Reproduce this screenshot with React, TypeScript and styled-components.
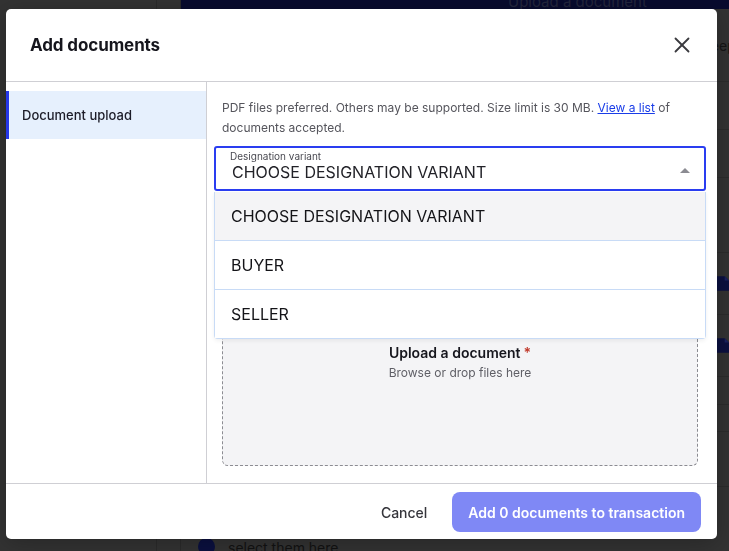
import React from "react";
import styled, {createGlobalStyle} from "styled-components";
import {X} from "lucide-react";

const GlobalStyle = createGlobalStyle`
  html, body {
    margin: 0;
    padding: 0;
    height: 100%;
    overflow: hidden;
  }
  body {
    font-family: Inter, "Noto Sans", sans-serif;
    background: #333333;
  }
  * {
    box-sizing: border-box;
  }
`;

/* ---------- dimmed page behind the dialog ---------- */

const Page = styled.div`
  display: flex;
  height: 100vh;
  background: #333333;
`;

const BgNav = styled.div`
  width: 157px;
  flex-shrink: 0;
  border-right: 1px solid #2b2b2b;
`;

const BgRail = styled.div`
  width: 24px;
  flex-shrink: 0;
  border-right: 1px solid #2b2b2b;
`;

const BgMain = styled.div`
  flex: 1;
  display: flex;
  flex-direction: column;
  min-width: 0;
`;

const BgTopBar = styled.div`
  height: 9px;
  flex-shrink: 0;
  background: #080b2e;
  overflow: hidden;
  display: flex;
  align-items: flex-end;
  padding-left: 327px;
  color: #23263d;
  font-size: 15px;
  line-height: 15px;
`;

const BgRow = styled.div<{$h: number}>`
  height: ${p => p.$h}px;
  flex-shrink: 0;
  border-bottom: 1px solid #2c2c2c;
  display: flex;
  align-items: center;
  padding-left: 521px;
  color: #151515;
  font-size: 14px;
  white-space: nowrap;
  overflow: hidden;
`;

const BgDocRow = styled(BgRow)`
  padding-left: 536px;
`;

const BgBanner = styled.div`
  display: flex;
  gap: 13px;
  padding: 0 0 0 17px;
  margin-top: 31px;
  color: #121212;
  font-size: 14px;
  line-height: 20px;
  white-space: nowrap;
`;

const InfoDot = styled.div`
  width: 17px;
  height: 17px;
  border-radius: 50%;
  background: #0b1040;
  margin-top: 20px;
  flex-shrink: 0;
`;

/* ---------- dialog ---------- */

const Overlay = styled.div`
  position: fixed;
  inset: 0;
  padding: 9px 12px 12px 6px;
  display: flex;
`;

const Modal = styled.div`
  flex: 1;
  display: flex;
  flex-direction: column;
  background: #ffffff;
  border-radius: 5px;
  box-shadow: 0 4px 24px rgba(0, 0, 0, 0.25);
`;

const Header = styled.div`
  height: 73px;
  flex-shrink: 0;
  display: flex;
  align-items: center;
  justify-content: space-between;
  padding: 0 22px 0 24px;
  border-bottom: 1px solid #cfcfd4;
`;

const Title = styled.h2`
  margin: 0;
  font-size: 17px;
  font-weight: 700;
  letter-spacing: -0.1px;
  color: #16161d;
`;

const CloseButton = styled.button`
  border: 0;
  background: none;
  padding: 0;
  display: flex;
  color: #3a3a3f;
  cursor: pointer;
`;

const Body = styled.div`
  flex: 1;
  display: flex;
  min-height: 0;
`;

const Sidebar = styled.nav`
  width: 201px;
  flex-shrink: 0;
  padding-top: 9px;
  border-right: 1px solid #cfcfd4;
`;

const NavItem = styled.div<{$active?: boolean}>`
  height: 48px;
  display: flex;
  align-items: center;
  padding-left: 13px;
  border-left: 3px solid ${p => (p.$active ? "#2537e8" : "transparent")};
  background: ${p => (p.$active ? "#e6f0fd" : "transparent")};
  font-size: 13px;
  font-weight: 500;
  color: #1c1c28;
`;

const Content = styled.div`
  flex: 1;
  display: flex;
  flex-direction: column;
  padding: 16px 19px 17px 15px;
`;

const Hint = styled.p`
  margin: 0;
  font-size: 12px;
  line-height: 20px;
  color: #55555c;
`;

const Link = styled.a`
  color: #1a3de8;
  text-decoration: underline;
`;

const SelectWrap = styled.div`
  position: relative;
  margin: 8px -8px 0;
`;

const SelectBox = styled.div`
  height: 45px;
  display: flex;
  align-items: center;
  border: 2px solid #2a3df0;
  border-radius: 3px;
  padding: 0 14px;
`;

const SelectValue = styled.div`
  flex: 1;
  display: flex;
  flex-direction: column;
  padding-bottom: 5px;
`;

const SelectLabel = styled.span`
  font-size: 10px;
  line-height: 12px;
  color: #4a4a52;
`;

const SelectText = styled.span`
  font-size: 16px;
  line-height: 20px;
  color: #222228;
  padding-left: 2px;
`;

const Caret = styled.span`
  width: 0;
  height: 0;
  margin-top: 3px;
  border-left: 5px solid transparent;
  border-right: 5px solid transparent;
  border-bottom: 5px solid #8b8b92;
`;

const Menu = styled.ul`
  position: absolute;
  top: 100%;
  left: 0;
  right: 0;
  margin: 1px 0 0;
  padding: 0;
  list-style: none;
  background: #ffffff;
  border: 1px solid #c8dbf6;
  border-top: 0;
  border-radius: 0 0 4px 4px;
  box-shadow: 0 2px 4px rgba(0, 0, 0, 0.06);
  z-index: 2;
`;

const MenuItem = styled.li<{$hover?: boolean}>`
  height: 49px;
  display: flex;
  align-items: center;
  padding-left: 16px;
  font-size: 16px;
  color: #141418;
  background: ${p => (p.$hover ? "#f4f4f6" : "#ffffff")};
  border-bottom: 1px solid #c8dbf6;
  &:last-child {
    border-bottom: 0;
    height: 48px;
  }
`;

const DropZone = styled.div`
  flex: 1;
  margin-top: 16px;
  border: 1px dashed #8c8c92;
  border-radius: 6px;
  background: #f4f4f6;
  text-align: center;
  padding-top: 135px;
`;

const DropTitle = styled.div`
  font-size: 14px;
  line-height: 20px;
  font-weight: 600;
  color: #16161d;
`;

const Required = styled.span`
  color: #c0392b;
  margin-left: 3px;
`;

const DropHint = styled.div`
  font-size: 12px;
  line-height: 20px;
  color: #5f5f66;
`;

const Footer = styled.div`
  height: 56px;
  flex-shrink: 0;
  display: flex;
  align-items: center;
  justify-content: flex-end;
  gap: 25px;
  padding-right: 16px;
  border-top: 1px solid #cfcfd4;
`;

const TextButton = styled.button`
  border: 0;
  background: none;
  padding: 0;
  font-family: inherit;
  font-size: 14px;
  font-weight: 500;
  color: #35353b;
  margin-top: 1px;
`;

const PrimaryButton = styled.button`
  height: 40px;
  border: 0;
  border-radius: 8px;
  padding: 0 16px;
  background: #7f88f5;
  color: #ffffff;
  font-family: inherit;
  font-size: 14px;
  font-weight: 600;
  margin-top: 1px;
`;

const FileIcon = () => (
  <svg width="14" height="17" viewBox="0 0 14 17">
    <path d="M0 0h9l5 5v12H0z" fill="#0b1040" />
    <path d="M9 0v5h5" fill="#1b2260" />
  </svg>
);

const options = ["CHOOSE DESIGNATION VARIANT", "BUYER", "SELLER"];

export default function App() {
  return (
    <>
      <GlobalStyle />
      <Page>
        <BgNav />
        <BgRail />
        <BgMain>
          <BgTopBar>
            <span>Upload a document</span>
          </BgTopBar>
          <BgRow $h={73}>Keep</BgRow>
          <BgRow $h={48} />
          <BgRow $h={48} />
          <BgRow $h={75} />
          <BgDocRow $h={62}>
            <FileIcon />
          </BgDocRow>
          <BgDocRow $h={62}>
            <FileIcon />
          </BgDocRow>
          <BgRow $h={28} />
          <BgRow $h={27} />
          <BgRow $h={55} />
          <BgBanner>
            <InfoDot />
            <div>
              <div>Documents already in this transaction will not be duplicated. You can find</div>
              <div>select them here</div>
            </div>
          </BgBanner>
        </BgMain>
      </Page>

      <Overlay>
        <Modal>
          <Header>
            <Title>Add documents</Title>
            <CloseButton aria-label="close">
              <X size={26} strokeWidth={1.7} />
            </CloseButton>
          </Header>

          <Body>
            <Sidebar>
              <NavItem $active>Document upload</NavItem>
            </Sidebar>

            <Content>
              <Hint>
                PDF files preferred. Others may be supported. Size limit is 30 MB. <Link href="#">View a list</Link> of
                documents accepted.
              </Hint>

              <SelectWrap>
                <SelectBox>
                  <SelectValue>
                    <SelectLabel>Designation variant</SelectLabel>
                    <SelectText>CHOOSE DESIGNATION VARIANT</SelectText>
                  </SelectValue>
                  <Caret />
                </SelectBox>
                <Menu>
                  {options.map((o, i) => (
                    <MenuItem key={o} $hover={i === 0}>
                      {o}
                    </MenuItem>
                  ))}
                </Menu>
              </SelectWrap>

              <DropZone>
                <DropTitle>
                  Upload a document<Required>*</Required>
                </DropTitle>
                <DropHint>Browse or drop files here</DropHint>
              </DropZone>
            </Content>
          </Body>

          <Footer>
            <TextButton>Cancel</TextButton>
            <PrimaryButton>Add 0 documents to transaction</PrimaryButton>
          </Footer>
        </Modal>
      </Overlay>
    </>
  );
}
